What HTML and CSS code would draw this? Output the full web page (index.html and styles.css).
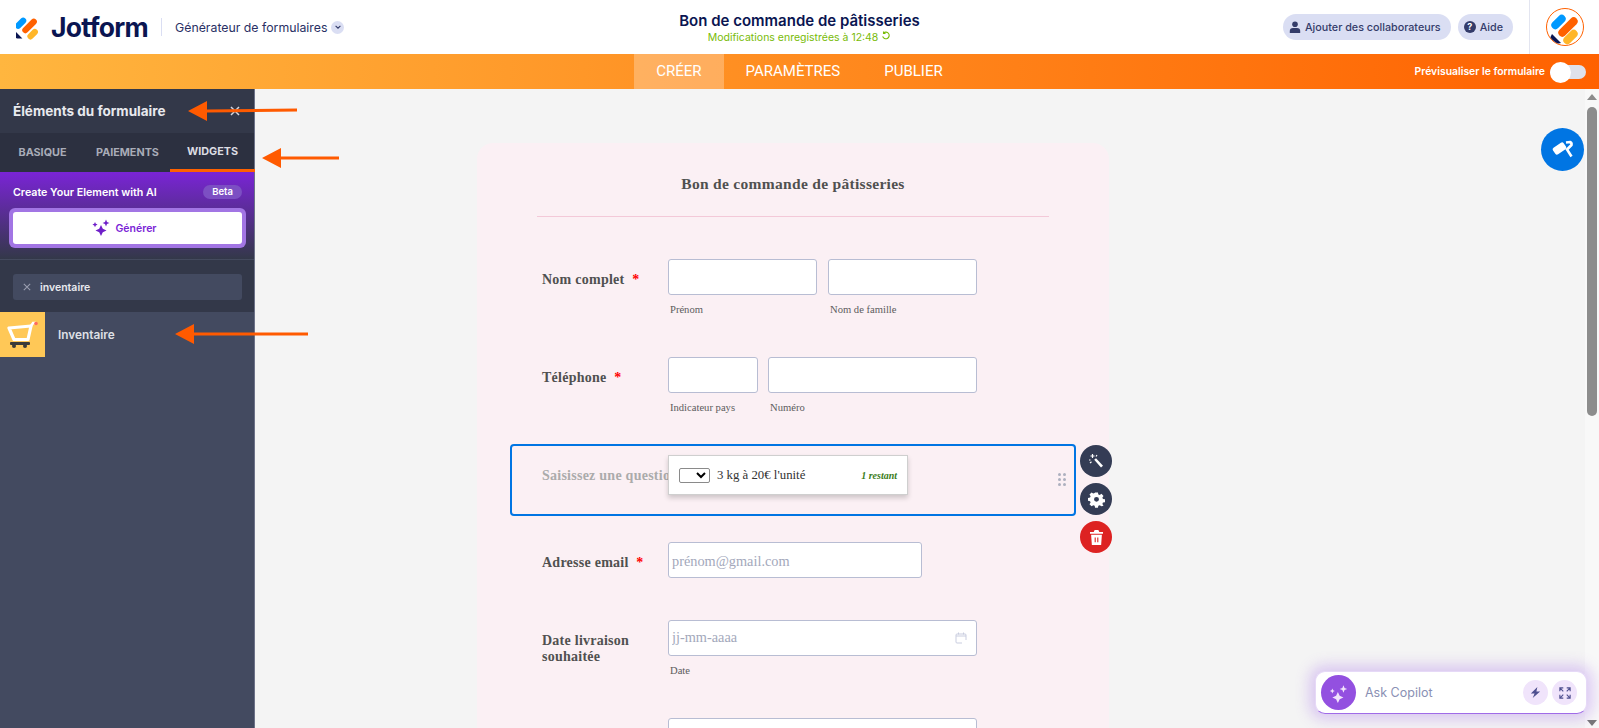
FILE: index.html
```html
<!DOCTYPE html>
<html lang="fr">
<head>
    <meta charset="UTF-8">
    <title>Bon de commande de pâtisseries</title>
    <link rel="stylesheet" href="styles.css">
</head>
<body>

<header class="topbar">
    <div class="topbar-left">
        <svg class="logo" viewBox="0.4 0.6 22.4 24" width="23" height="25">
            <rect x="-1.8" y="5.6" width="13" height="6" rx="3" fill="#0099ff" transform="rotate(-45 4.7 8.3)"/>
            <rect x="4.6" y="8.2" width="17.6" height="6" rx="3" fill="#ff6100" transform="rotate(-45 13.4 10.9)"/>
            <rect x="10.4" y="16.2" width="12" height="6" rx="3" fill="#ffb629" transform="rotate(-45 16.4 18.9)"/>
            <path d="M0.4 17 L6.6 23.4 H1.8 Q0.4 23.4 0.4 22 Z" fill="#0a1551"/>
        </svg>
        <span class="wordmark">Jotform</span>
        <span class="brand-sep"></span>
        <span class="builder">Générateur de formulaires</span>
        <span class="caret">
            <svg viewBox="0 0 10 10" width="8" height="8"><path d="M2 3.5 L5 6.5 L8 3.5" fill="none" stroke="#343c6a" stroke-width="1.4"/></svg>
        </span>
    </div>
    <div class="topbar-center">
        <div class="doc-title">Bon de commande de pâtisseries</div>
        <div class="doc-status">Modifications enregistrées à 12:48
            <svg viewBox="0 0 12 12" width="10" height="10"><path d="M3 2.5 A4 4 0 1 1 2 6.5 M3 .6 V3 H5.4" fill="none" stroke="#78bb07" stroke-width="1.3"/></svg>
        </div>
    </div>
    <div class="topbar-right">
        <button class="pill">
            <svg viewBox="0 0 12 12" width="12" height="12"><circle cx="6" cy="3.2" r="2.8" fill="#343c6a"/><path d="M.8 12 V10 Q.8 7 4 7 H8 Q11.2 7 11.2 10 V12 Z" fill="#343c6a"/></svg>
            Ajouter des collaborateurs
        </button>
        <button class="pill">
            <span class="help-dot">?</span>
            Aide
        </button>
        <div class="avatar-cell">
            <div class="avatar">
                <svg viewBox="0 0 36 36" width="36" height="36">
                    <rect x="3" y="9" width="17" height="8" rx="4" fill="#0099ff" transform="rotate(-45 11.5 13)"/>
                    <rect x="9" y="14" width="24" height="8" rx="4" fill="#ff6100" transform="rotate(-45 21 18)"/>
                    <rect x="15" y="24" width="17" height="8" rx="4" fill="#ffb629" transform="rotate(-45 23.5 28)"/>
                    <path d="M5 25 L14 34 L9 35 L3 29 Z" fill="#0a1551"/>
                </svg>
            </div>
        </div>
    </div>
</header>

<nav class="tabbar">
    <a class="tabbar-item active" href="#">CRÉER</a>
    <a class="tabbar-item" href="#">PARAMÈTRES</a>
    <a class="tabbar-item" href="#">PUBLIER</a>
    <div class="preview">
        <span>Prévisualiser le formulaire</span>
        <span class="toggle"><i></i></span>
    </div>
</nav>

<div class="workspace">

    <aside class="sidebar">
        <div class="side-head">
            <span>Éléments du formulaire</span>
            <svg viewBox="0 0 10 10" width="10" height="10"><path d="M1 1 L9 9 M9 1 L1 9" stroke="#d5d7e0" stroke-width="1.5"/></svg>
        </div>
        <div class="side-tabs">
            <span>BASIQUE</span>
            <span>PAIEMENTS</span>
            <span class="cur">WIDGETS</span>
        </div>
        <div class="ai-box">
            <div class="ai-title">
                <span>Create Your Element with AI</span>
                <em>Beta</em>
            </div>
            <div class="ai-btn">
                <button>
                    <svg viewBox="0 0 18 18" width="18" height="18" fill="#6f1fc9">
                        <path d="M9 6 L10.8 9.7 L14.5 11.5 L10.8 13.3 L9 17 L7.2 13.3 L3.5 11.5 L7.2 9.7 Z"/>
                        <path d="M14 0.5 L15 2.9 L17.4 4 L15 5 L14 7.4 L13 5 L10.6 4 L13 2.9 Z"/>
                        <path d="M3 3 L3.8 4.8 L5.6 5.6 L3.8 6.4 L3 8.2 L2.2 6.4 L.4 5.6 L2.2 4.8 Z"/>
                    </svg>
                    Générer
                </button>
            </div>
        </div>
        <div class="side-search">
            <div class="search-field">
                <svg viewBox="0 0 10 10" width="8" height="8"><path d="M1 1 L9 9 M9 1 L1 9" stroke="#9a9eb0" stroke-width="1.3"/></svg>
                <span>inventaire</span>
            </div>
        </div>
        <div class="side-item">
            <span class="item-icon">
                <svg viewBox="0 0 32 28" width="32" height="28">
                    <path d="M2 7 L24 5 L21 18.5 H7 Z" fill="none" stroke="#fff" stroke-width="3.2" stroke-linejoin="round"/>
                    <path d="M24 5 L26 2 H29" fill="none" stroke="#fff" stroke-width="2.4"/>
                    <circle cx="29" cy="2.5" r="1.8" fill="#ff6b5e"/>
                    <rect x="3" y="21" width="20" height="3" rx="1" fill="#3a3a3a"/>
                    <circle cx="7" cy="25" r="2" fill="#3a3a3a"/>
                    <circle cx="18" cy="25" r="2" fill="#3a3a3a"/>
                </svg>
            </span>
            <span>Inventaire</span>
        </div>
    </aside>

    <main class="canvas">
        <form class="card">
            <h1 class="card-title">Bon de commande de pâtisseries</h1>

            <div class="row">
                <label class="q-label">Nom complet <b>*</b></label>
                <div class="fields">
                    <div class="field w-149"><input type="text"><small>Prénom</small></div>
                    <div class="field w-149"><input type="text"><small>Nom de famille</small></div>
                </div>
            </div>

            <div class="row row-before-select">
                <label class="q-label">Téléphone <b>*</b></label>
                <div class="fields">
                    <div class="field w-90"><input type="text"><small>Indicateur pays</small></div>
                    <div class="field w-209"><input type="text"><small>Numéro</small></div>
                </div>
            </div>

            <div class="row row-selected">
                <label class="q-label muted">Saisissez une question</label>
                <div class="widget">
                    <select class="qty"><option></option></select>
                    <span class="widget-text">3 kg à 20€ l'unité</span>
                    <em class="stock">1 restant</em>
                </div>
                <span class="drag"><i></i><i></i><i></i><i></i><i></i><i></i></span>
                <div class="row-actions">
                    <span class="act">
                        <svg viewBox="0 0 16 16" width="16" height="16"><path d="M6.2 6.8 L8 5.2 L15 12.8 L13 14.6 Z" fill="#fff"/><path d="M4.5 1 V5 M2.5 3 H6.5 M1 7 L2.5 7 M9 2 L8 3.5 M2 10 L3.5 8.8" stroke="#fff" stroke-width="1.2"/></svg>
                    </span>
                    <span class="act">
                        <svg viewBox="0 0 24 24" width="17" height="17"><path fill="#fff" fill-rule="evenodd" d="M10 2h4l.6 2.8 1.9.8L19 4l2.9 2.9-1.6 2.4.8 1.9 2.9.6v4l-2.9.6-.8 1.9 1.6 2.4L19 21.6l-2.5-1.6-1.9.8L14 23.6h-4l-.6-2.8-1.9-.8L5 21.6 2.1 18.7l1.6-2.4-.8-1.9L0 13.8v-4l2.9-.6.8-1.9L2.1 4.9 5 2l2.5 1.6 1.9-.8zM12 8.3a3.5 3.5 0 1 0 0 7 3.5 3.5 0 0 0 0-7z"/></svg>
                    </span>
                    <span class="act act-del">
                        <svg viewBox="0 0 14 16" width="13" height="15"><path fill="#fff" fill-rule="evenodd" d="M5 0h4l1 2h4v2H0V2h4zM1.2 5h11.6l-.8 11H2zM5 8v5h1.2V8zm2.8 0v5H9V8z"/></svg>
                    </span>
                </div>
            </div>

            <div class="row row-email">
                <label class="q-label">Adresse email <b>*</b></label>
                <div class="fields">
                    <div class="field w-254"><input type="text" placeholder="prénom@gmail.com"></div>
                </div>
            </div>

            <div class="row">
                <label class="q-label">Date livraison souhaitée</label>
                <div class="fields">
                    <div class="field w-309 date-field">
                        <input type="text" placeholder="jj-mm-aaaa">
                        <svg class="cal" viewBox="0 0 12 12" width="12" height="12"><path d="M3.5 .5 V2.5 M8.5 .5 V2.5 M1 4 H11 M7 11 H2 Q1 11 1 10 V3 Q1 2 2 2 H10 Q11 2 11 3 V8" fill="none" stroke="#c9cddf" stroke-width="1"/></svg>
                        <small>Date</small>
                    </div>
                </div>
            </div>

            <div class="row">
                <span class="q-label"></span>
                <div class="fields">
                    <div class="field w-309"><input type="text"></div>
                </div>
            </div>
        </form>

        <span class="designer">
            <svg viewBox="0 0 24 24" width="24" height="24"><rect x="2" y="6.5" width="13" height="8" rx="2" fill="#fff" transform="rotate(-35 8.5 10.5)"/><path d="M15 4.5 L19 4 Q21 5 20.5 7 L16 11.5 L20.5 18.5" fill="none" stroke="#fff" stroke-width="2.6"/></svg>
        </span>

        <div class="scrollbar">
            <i class="arrow-up"></i>
            <i class="thumb"></i>
            <i class="arrow-down"></i>
        </div>

        <div class="copilot">
            <span class="copilot-logo">
                <svg viewBox="0 0 18 18" width="20" height="20" fill="#f1e4fb">
                    <path d="M8 8 L9.6 11.4 L13 13 L9.6 14.6 L8 18 L6.4 14.6 L3 13 L6.4 11.4 Z"/>
                    <path d="M13 2 L14 4.4 L16.4 5.4 L14 6.4 L13 8.8 L12 6.4 L9.6 5.4 L12 4.4 Z"/>
                    <path d="M3 5 L3.7 6.5 L5.2 7.2 L3.7 7.9 L3 9.4 L2.3 7.9 L.8 7.2 L2.3 6.5 Z"/>
                </svg>
            </span>
            <span class="copilot-text">Ask Copilot</span>
            <span class="copilot-btn">
                <svg viewBox="0 0 14 14" width="13" height="13"><path d="M9 1 L2 8 H6 L4 13 L12 6 H8 Z" fill="#4e4f8f"/></svg>
            </span>
            <span class="copilot-btn">
                <svg viewBox="0 0 14 14" width="12" height="12"><path d="M1 5 V1 H5 M1 1 L5 5 M13 5 V1 H9 M13 1 L9 5 M1 9 V13 H5 M1 13 L5 9 M13 9 V13 H9 M13 13 L9 9" fill="none" stroke="#4e4f8f" stroke-width="1.3"/></svg>
            </span>
        </div>
    </main>

</div>

<!-- fleches d'annotation par dessus la capture -->
<svg class="note note-1" viewBox="0 0 109 20" width="109" height="20"><path d="M0 10 L19 0 V8.5 L109 7.5 V10.5 L19 11.5 V20 Z" fill="#ff5a00"/></svg>
<svg class="note note-2" viewBox="0 0 77 20" width="77" height="20"><path d="M0 10 L19 0 V8.5 H77 V11.5 H19 V20 Z" fill="#ff5a00"/></svg>
<svg class="note note-3" viewBox="0 0 133 20" width="133" height="20"><path d="M0 10 L19 0 V8.5 H133 V11.5 H19 V20 Z" fill="#ff5a00"/></svg>

</body>
</html>
```

FILE: styles.css
```css
* {
    margin: 0;
    padding: 0;
    box-sizing: border-box;
}

html, body {
    height: 100%;
    overflow: hidden;
}

body {
    font-family: Inter, "Open Sans", sans-serif;
    background: #f4f4f4;
    color: #0a1551;
}

button {
    border: 0;
    font-family: inherit;
}

/* top */

.topbar {
    display: grid;
    grid-template-columns: 1fr auto 1fr;
    align-items: center;
    height: 54px;
    background: #fff;
}

.topbar-left {
    display: flex;
    align-items: center;
    padding-left: 16px;
}

.logo {
    margin-right: 12px;
}

.wordmark {
    font-size: 26.5px;
    font-weight: 700;
    letter-spacing: -0.7px;
    color: #0a1551;
}

.brand-sep {
    margin: 0 13px 0 13px;
    width: 1px;
    height: 18px;
    background: #dadef3;
}

.builder {
    font-size: 12.3px;
    color: #293064;
}

.caret {
    display: flex;
    align-items: center;
    justify-content: center;
    margin-left: 4px;
    width: 13px;
    height: 13px;
    border-radius: 50%;
    background: #dadef3;
}

.topbar-center {
    text-align: center;
}

.doc-title {
    font-size: 15px;
    font-weight: 600;
    line-height: 20px;
    color: #0a1551;
}

.doc-status {
    font-size: 10.5px;
    line-height: 12px;
    color: #78bb07;
}

.topbar-right {
    display: flex;
    align-items: center;
    justify-content: flex-end;
    gap: 7px;
    height: 100%;
}

.pill {
    display: flex;
    align-items: center;
    gap: 4px;
    padding: 0 10px 0 6px;
    height: 26px;
    border-radius: 13px;
    background: #dadef3;
    color: #343c6a;
    font-size: 10.75px;
    font-weight: 500;
}

.help-dot {
    width: 12px;
    height: 12px;
    border-radius: 50%;
    background: #343c6a;
    color: #fff;
    font-size: 9px;
    font-weight: 700;
    line-height: 12px;
    text-align: center;
}

.avatar-cell {
    display: flex;
    align-items: center;
    justify-content: center;
    margin-left: 9px;
    border-left: 1px solid #e3e5f0;
    width: 70px;
    height: 100%;
}

.avatar {
    width: 38px;
    height: 38px;
    border: 1px solid #ff6100;
    border-radius: 50%;
    overflow: hidden;
}

/* orange bar */

.tabbar {
    position: relative;
    display: flex;
    justify-content: center;
    height: 35px;
    background: linear-gradient(90deg, #ffb63f, #ff6100);
}

.tabbar-item {
    padding: 0 22px;
    color: #fff;
    font-family: Roboto, sans-serif;
    font-size: 15px;
    line-height: 35px;
    text-decoration: none;
}

.tabbar-item.active {
    background: rgba(255, 255, 255, .27);
}

.preview {
    position: absolute;
    top: 0;
    right: 13px;
    display: flex;
    align-items: center;
    gap: 5px;
    height: 100%;
    color: #fff;
    font-size: 10.4px;
    font-weight: 600;
}

.toggle {
    position: relative;
    width: 36px;
    height: 14px;
    border-radius: 7px;
    background: #dfe1ea;
}

.toggle i {
    position: absolute;
    top: -3px;
    left: 0;
    width: 21px;
    height: 21px;
    border-radius: 50%;
    background: #fff;
}

/* main */

.workspace {
    display: flex;
    height: 639px;
}

.sidebar {
    flex: none;
    width: 255px;
    background: #434a60;
    border-right: 1px solid #6d7288;
    color: #fff;
}

.side-head {
    display: flex;
    align-items: center;
    justify-content: space-between;
    padding: 0 14px 0 13px;
    height: 44px;
    background: #333849;
    font-size: 13.5px;
    font-weight: 700;
    color: #e8e9ee;
}

.side-tabs {
    display: flex;
    height: 39px;
    background: #2c3040;
    font-size: 10.8px;
    font-weight: 700;
    color: #a9acb8;
}

.side-tabs span {
    display: flex;
    flex: none;
    align-items: center;
    justify-content: center;
    width: 85px;
}

.side-tabs .cur {
    color: #dcdde3;
    border-bottom: 3px solid #ff6100;
}

.ai-box {
    height: 88px;
    padding: 13px 12px 0 13px;
    border-bottom: 1px solid #444a5e;
    background: linear-gradient(180deg, #7a24d6, #333849);
}

.ai-title {
    display: flex;
    align-items: center;
    justify-content: space-between;
    height: 14px;
    font-size: 10.7px;
    font-weight: 600;
}

.ai-title em {
    width: 39px;
    border-radius: 7px;
    background: #7c4fc3;
    font-style: normal;
    font-size: 9.5px;
    line-height: 14px;
    text-align: center;
}

.ai-btn {
    margin: 9px -4px 0;
    padding: 4px;
    border-radius: 6px;
    background: #a275e4;
}

.ai-btn button {
    display: flex;
    align-items: center;
    justify-content: center;
    gap: 5px;
    padding-right: 6px;
    width: 100%;
    height: 32px;
    border-radius: 3px;
    background: #fff;
    color: #7a24d6;
    font-size: 10.5px;
    font-weight: 600;
}

.side-search {
    height: 52px;
    padding: 14px 12px 0 13px;
    background: #333849;
}

.search-field {
    display: flex;
    align-items: center;
    gap: 9px;
    padding-left: 10px;
    height: 26px;
    border-radius: 3px;
    background: #434a60;
    font-size: 10.5px;
    font-weight: 600;
    color: #e8e9ee;
}

.side-item {
    display: flex;
    align-items: center;
    gap: 13px;
    height: 45px;
    font-size: 11.8px;
    font-weight: 600;
    color: #dfe0e6;
}

.item-icon {
    display: flex;
    align-items: center;
    justify-content: center;
    width: 45px;
    height: 45px;
    background: #ffc857;
}

.canvas {
    position: relative;
    flex: 1;
    overflow: hidden;
}

/* form */

.card {
    margin: 54px 0 0 222px;
    padding: 1px 0 40px;
    width: 632px;
    border-radius: 16px;
    background: #fbf0f4;
    font-family: "Liberation Serif", serif;
}

.card-title {
    margin: 0 60px 42px;
    padding: 31px 0 23px;
    border-bottom: 1px solid #f3c9d8;
    color: #505050;
    font-size: 15.5px;
    font-weight: 700;
    letter-spacing: .3px;
    line-height: 18px;
    text-align: center;
}

.row {
    position: relative;
    display: flex;
    margin: 0 33px 40px;
    padding-left: 32px;
}

.row-before-select {
    margin-bottom: 29px;
}

.row-email {
    margin-bottom: 42px;
}

.q-label {
    flex: none;
    padding-top: 13px;
    width: 126px;
    color: #505050;
    font-size: 14px;
    font-weight: 700;
    letter-spacing: .25px;
    line-height: 16px;
}

.q-label b {
    margin-left: 4px;
    color: #f00;
}

.q-label.muted {
    color: #ababab;
    white-space: nowrap;
}

.fields {
    display: flex;
    gap: 11px;
}

.field {
    position: relative;
}

.w-90 { width: 90px; }
.w-149 { width: 149px; }
.w-209 { width: 209px; margin-left: -1px; }
.w-254 { width: 254px; }
.w-309 { width: 309px; }

.field input {
    display: block;
    padding: 2px 3px 0;
    width: 100%;
    height: 36px;
    border: 1px solid #b8bdd3;
    border-radius: 3px;
    background: #fff;
    font-family: "Liberation Serif", serif;
    font-size: 14.3px;
}

.date-field input {
    padding: 0 3px 2px;
}

.field input::placeholder {
    color: #a3a8bb;
}

.field small {
    display: block;
    padding: 8px 0 0 2px;
    height: 22px;
    color: #5c5c5c;
    font-size: 10.6px;
    line-height: 14px;
}

.cal {
    position: absolute;
    top: 12px;
    right: 10px;
}

.row-selected {
    margin-bottom: 26px;
    padding-top: 9px;
    height: 72px;
    border: 2px solid #0075e3;
    border-radius: 4px;
    padding-left: 30px;
}

.widget {
    position: relative;
    display: flex;
    align-items: center;
    padding: 0 10px;
    width: 240px;
    height: 40px;
    border: 1px solid #cfcfcf;
    background: #fff;
    box-shadow: 0 3px 5px rgba(0, 0, 0, .18);
}

.qty {
    width: 31px;
    height: 15px;
    border: 1px solid #8a8a8a;
    border-radius: 2px;
    background: #fff;
}

.widget-text {
    margin-left: 7px;
    color: #333;
    font-size: 12.8px;
}

.stock {
    margin-left: auto;
    color: #3a7d20;
    font-size: 10px;
    font-weight: 700;
}

.drag {
    position: absolute;
    top: 27px;
    right: 8px;
    display: grid;
    grid-template-columns: 3px 3px;
    gap: 2px;
}

.drag i {
    width: 3px;
    height: 3px;
    border-radius: 50%;
    background: #adb0bf;
}

.row-actions {
    position: absolute;
    top: -1px;
    left: 568px;
    display: flex;
    flex-direction: column;
    gap: 6px;
}

.act {
    display: flex;
    align-items: center;
    justify-content: center;
    width: 32px;
    height: 32px;
    border-radius: 50%;
    background: #343c55;
}

.act-del {
    background: #dd2222;
}

/* floating */

.designer {
    position: absolute;
    top: 39px;
    right: 15px;
    display: flex;
    align-items: center;
    justify-content: center;
    width: 43px;
    height: 43px;
    border-radius: 50%;
    background: #0075e3;
}

.scrollbar {
    position: absolute;
    top: 0;
    right: 0;
    bottom: 0;
    width: 14px;
    background: #f8f8f8;
}

.scrollbar i {
    position: absolute;
    left: 2px;
}

.scrollbar .thumb {
    top: 18px;
    width: 10px;
    height: 309px;
    border-radius: 5px;
    background: #8c8c8c;
}

.scrollbar .arrow-up,
.scrollbar .arrow-down {
    border-left: 5px solid transparent;
    border-right: 5px solid transparent;
}

.scrollbar .arrow-up {
    top: 5px;
    border-bottom: 6px solid #8c8c8c;
}

.scrollbar .arrow-down {
    bottom: 2px;
    border-top: 6px solid #777;
}

.copilot {
    position: absolute;
    top: 582px;
    left: 1060px;
    display: flex;
    align-items: center;
    padding: 0 9px 0 5px;
    width: 272px;
    height: 43px;
    border: 1px solid #e6d9f7;
    border-bottom-color: #a06be8;
    border-radius: 10px;
    background: #fff;
    box-shadow: 0 0 14px 6px rgba(160, 100, 235, .3);
}

.copilot-logo {
    display: flex;
    align-items: center;
    justify-content: center;
    width: 35px;
    height: 35px;
    border-radius: 50%;
    background: #9350e0;
}

.copilot-text {
    flex: 1;
    margin-left: 9px;
    color: #8a90b4;
    font-size: 12.5px;
}

.copilot-btn {
    display: flex;
    align-items: center;
    justify-content: center;
    margin-left: 4px;
    width: 25px;
    height: 25px;
    border-radius: 50%;
    background: #f0e4fb;
}

/* annotations */

.note {
    position: absolute;
}

.note-1 { left: 188px; top: 101px; }
.note-2 { left: 262px; top: 148px; }
.note-3 { left: 175px; top: 324px; }
```
